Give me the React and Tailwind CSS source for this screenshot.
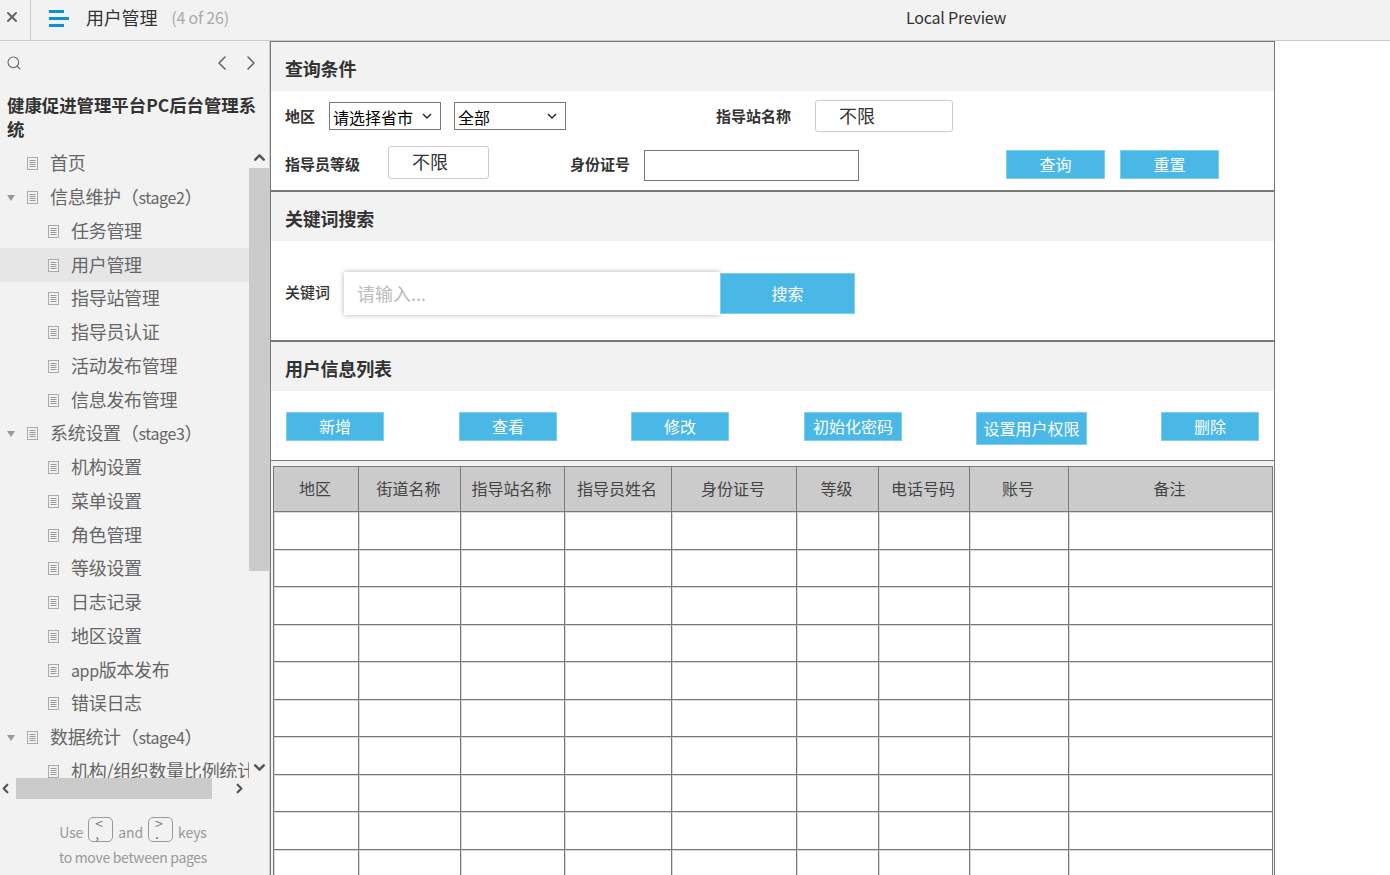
import { X, Search, ChevronLeft, ChevronRight, ChevronUp, ChevronDown } from 'lucide-react';

const NAV = [
  { label: '首页', level: 1 },
  { label: '信息维护（', latin: 'stage2', tail: '）', level: 1, open: true },
  { label: '任务管理', level: 2 },
  { label: '用户管理', level: 2, active: true },
  { label: '指导站管理', level: 2 },
  { label: '指导员认证', level: 2 },
  { label: '活动发布管理', level: 2 },
  { label: '信息发布管理', level: 2 },
  { label: '系统设置（', latin: 'stage3', tail: '）', level: 1, open: true },
  { label: '机构设置', level: 2 },
  { label: '菜单设置', level: 2 },
  { label: '角色管理', level: 2 },
  { label: '等级设置', level: 2 },
  { label: '日志记录', level: 2 },
  { label: '地区设置', level: 2 },
  { lead: 'app', label: '版本发布', level: 2 },
  { label: '错误日志', level: 2 },
  { label: '数据统计（', latin: 'stage4', tail: '）', level: 1, open: true },
  { label: '机构/组织数量比例统计', level: 2 },
];

const COLUMNS = [
  { title: '地区', width: 'w-[85px]' },
  { title: '街道名称', width: 'w-[102px]' },
  { title: '指导站名称', width: 'w-[104px]' },
  { title: '指导员姓名', width: 'w-[107px]' },
  { title: '身份证号', width: 'w-[125px]' },
  { title: '等级', width: 'w-[82px]' },
  { title: '电话号码', width: 'w-[91px]' },
  { title: '账号', width: 'w-[99px]' },
  { title: '备注', width: 'w-[204px]' },
];

const ROWS = [0, 1, 2, 3, 4, 5, 6, 7, 8, 9];

function DocIcon() {
  return (
    <svg width="11" height="13" viewBox="0 0 11 13" className="shrink-0">
      <rect x="0.5" y="0.5" width="10" height="12" fill="#f2f2f2" stroke="#aaaaaa" />
      <path d="M2.5 3.5h6M2.5 5.5h6M2.5 7.5h6M2.5 9.5h6" stroke="#999999" strokeWidth="1" />
    </svg>
  );
}

function NavItem({ item }) {
  return (
    <div className={`flex items-center h-[33.75px] shrink-0 whitespace-nowrap text-[18px] tracking-[-0.3px] text-[#666666] ${item.active ? 'bg-[#e6e6e6]' : ''} ${item.level === 2 ? 'pl-[48px]' : 'pl-[27px]'}`}>
      {item.open && (
        <span className="absolute left-[7px] w-0 h-0 border-l-[4.5px] border-r-[4.5px] border-t-[6px] border-l-transparent border-r-transparent border-t-[#999999]" />
      )}
      <DocIcon />
      <span className="ml-[12px] pb-[2px]">
        {item.lead && <span className="text-[16px] tracking-[-0.4px]">{item.lead}</span>}
        {item.label}
        {item.latin && <span className="text-[16px] tracking-[-0.4px]">{item.latin}</span>}
        {item.tail}
      </span>
    </div>
  );
}

function KeyCap({ top, bottom }) {
  return (
    <span className="inline-flex flex-col w-[25px] h-[25px] mx-[5px] pl-[6px] border border-[#999999] rounded-[5px] text-[14px] leading-[10px] text-[#777777]">
      <span>{top}</span>
      <span>{bottom}</span>
    </span>
  );
}

function Sidebar() {
  return (
    <aside className="flex flex-col w-[270px] h-full shrink-0 bg-[#f2f2f2] border-r border-[#cccccc] text-[#333333]">
      <div className="flex items-center h-[43px] shrink-0 pl-[6px] pr-[6px]">
        <Search size={16} strokeWidth={1.6} color="#666666" />
        <ChevronLeft size={24} strokeWidth={1.6} color="#666666" className="ml-auto" />
        <ChevronRight size={24} strokeWidth={1.6} color="#666666" className="ml-[5px]" />
      </div>
      <h1 className="w-[256px] ml-[7px] mt-[9px] text-[17.4px] leading-[24px] font-bold text-[#333333]">健康促进管理平台PC后台管理系统</h1>
      <div className="flex h-[631px] mt-[6px] shrink-0 overflow-hidden relative">
        <div className="relative flex flex-col flex-1 min-w-0 overflow-hidden">
          {NAV.map((item) => (
            <NavItem key={item.label} item={item} />
          ))}
        </div>
        <div className="flex flex-col items-center w-[20px] shrink-0">
          <ChevronUp size={17} strokeWidth={3.5} color="#555555" className="h-[21px]" />
          <div className="w-full h-[403px] bg-[#cbcbcb]" />
          <div className="flex-1" />
          <ChevronDown size={17} strokeWidth={3.5} color="#555555" className="h-[21px]" />
        </div>
      </div>
      <div className="flex items-center h-[21px] shrink-0 bg-[#f2f2f2]">
        <ChevronLeft size={15} strokeWidth={3.5} color="#555555" className="-ml-[2px]" />
        <div className="w-[196px] h-full ml-[3px] bg-[#cbcbcb]" />
        <ChevronRight size={15} strokeWidth={3.5} color="#555555" className="ml-[20px]" />
      </div>
      <div className="flex flex-col items-center mt-[18px] pr-[3px] text-[14px] text-[#999999]">
        <div className="flex items-start h-[26px] tracking-[-0.1px]">
          <span className="mt-[5px]">Use</span>
          <KeyCap top="<" bottom="," />
          <span className="mt-[5px]">and</span>
          <KeyCap top=">" bottom="." />
          <span className="mt-[5px]">keys</span>
        </div>
        <div className="mt-[3px] leading-[22px] tracking-[-0.3px]">to move between pages</div>
      </div>
    </aside>
  );
}

function BlueButton({ children, className }) {
  return (
    <button type="button" className={`flex items-center justify-center shrink-0 pb-[2px] bg-[#4ab8e6] border border-[#7fd0ef] text-[16px] text-white ${className}`}>
      {children}
    </button>
  );
}

function SectionHeader({ children }) {
  return (
    <div className="flex items-center h-[49px] pl-[14px] pt-[3px] bg-[#f2f2f2] text-[18px] font-bold tracking-[-0.2px] text-[#333333]">{children}</div>
  );
}

function Select({ children }) {
  return (
    <div className="flex items-center shrink-0 w-[112px] h-[28px] pl-[3px] border border-[#797979] bg-white text-[16px] text-black">
      <span className="w-[89px] pt-[2px]">{children}</span>
      <svg width="10" height="6" viewBox="0 0 10 6" className="-mt-[1px]">
        <path d="M1 1l4 4 4-4" fill="none" stroke="#222222" strokeWidth="1.4" />
      </svg>
    </div>
  );
}

function LimitBox({ className }) {
  return (
    <div className={`flex items-center shrink-0 pl-[23px] pb-[2px] border border-[#cccccc] rounded-[3px] bg-white text-[18px] text-[#333333] ${className}`}>不限</div>
  );
}

function Label({ children, className }) {
  return <span className={`shrink-0 text-[15px] font-bold text-[#333333] ${className}`}>{children}</span>;
}

export default function App() {
  return (
    <div className="flex flex-col w-[1390px] h-[875px] overflow-hidden bg-white font-['Noto_Sans_CJK_SC','Noto_Sans',sans-serif]">
      <header className="flex items-center h-[41px] shrink-0 bg-[#f2f2f2] border-b border-[#cccccc]">
        <div className="flex items-center justify-center w-[31px] h-full pb-[6px] pr-[7px] border-r border-[#cccccc]">
          <X size={16} strokeWidth={3} color="#666666" />
        </div>
        <div className="flex flex-col gap-[4px] ml-[18px] -mt-[3px]">
          <span className="block w-[15px] h-[3px] bg-[#0b90d2]" />
          <span className="block w-[20px] h-[3px] bg-[#0b90d2]" />
          <span className="block w-[15px] h-[3px] bg-[#0b90d2]" />
        </div>
        <span className="ml-[17px] -mt-[6px] text-[18px] tracking-[-0.2px] text-[#333333]">用户管理</span>
        <span className="ml-[14px] -mt-[6px] text-[16px] tracking-[-0.2px] text-[#aaaaaa]">(4 of 26)</span>
        <span className="ml-[677px] -mt-[6px] text-[16px] tracking-[-0.2px] text-[#333333]">Local Preview</span>
      </header>

      <div className="flex flex-1 min-h-0">
        <Sidebar />
        <main className="w-[1005px] h-full shrink-0 overflow-hidden border-x border-t border-[#797979]">
          <SectionHeader>查询条件</SectionHeader>
          <div className="h-[101px] pt-[9px] pl-[14px] border-b-2 border-[#797979]">
            <div className="flex items-center h-[32px]">
              <Label className="w-[44px]">地区</Label>
              <Select>请选择省市</Select>
              <span className="ml-[13px]" />
              <Select>全部</Select>
              <Label className="ml-[150px] w-[99px]">指导站名称</Label>
              <LimitBox className="w-[138px] h-[32px]" />
            </div>
            <div className="flex items-start mt-[14px]">
              <Label className="w-[103px] mt-[7px]">指导员等级</Label>
              <LimitBox className="w-[101px] h-[33px]" />
              <Label className="ml-[81px] w-[74px] mt-[7px]">身份证号</Label>
              <input type="text" className="shrink-0 w-[215px] h-[31px] mt-[4px] border border-[#797979] bg-white" />
              <BlueButton className="w-[99px] h-[29px] mt-[4px] ml-[147px]">查询</BlueButton>
              <BlueButton className="w-[99px] h-[29px] mt-[4px] ml-[15px]">重置</BlueButton>
            </div>
          </div>

          <SectionHeader>关键词搜索</SectionHeader>
          <div className="flex items-start h-[101px] pt-[31px] pl-[14px] border-b-2 border-[#797979]">
            <span className="shrink-0 w-[59px] mt-[9px] text-[15px] font-medium text-[#333333]">关键词</span>
            <input type="text" placeholder="请输入..." className="shrink-0 w-[376px] h-[43px] pl-[13px] pb-[2px] bg-white text-[18px] shadow-[0_0_5px_rgba(0,0,0,0.3)] outline-none placeholder:text-[#bbbbbb]" />
            <BlueButton className="w-[135px] h-[41px] mt-[1px]">搜索</BlueButton>
          </div>

          <SectionHeader>用户信息列表</SectionHeader>
          <div className="flex items-start h-[70px] pt-[21px] pl-[15px] border-b border-[#797979]">
            <BlueButton className="w-[98px] h-[29px]">新增</BlueButton>
            <BlueButton className="w-[98px] h-[29px] ml-[75px]">查看</BlueButton>
            <BlueButton className="w-[98px] h-[29px] ml-[74px]">修改</BlueButton>
            <BlueButton className="w-[98px] h-[29px] ml-[75px]">初始化密码</BlueButton>
            <BlueButton className="w-[111px] h-[33px] ml-[74px]">设置用户权限</BlueButton>
            <BlueButton className="w-[98px] h-[29px] ml-[74px]">删除</BlueButton>
          </div>
          <div className="h-full pt-[5px] pl-[2px] bg-[#f2f2f2]">
            <table className="w-[1000px] table-fixed border-collapse border border-[#797979] bg-white">
              <thead>
                <tr className="h-[45px] bg-[#cbcbcb]">
                  {COLUMNS.map((col) => (
                    <th key={col.title} className={`${col.width} p-0 pb-[2px] pr-[2px] border border-[#797979] text-[16px] font-normal text-[#444444]`}>{col.title}</th>
                  ))}
                </tr>
              </thead>
              <tbody>
                {ROWS.map((row) => (
                  <tr key={row} className="h-[37.5px]">
                    {COLUMNS.map((col) => (
                      <td key={col.title} className="p-0 border border-[#797979] shadow-[inset_1px_1px_0_#d9d9d9]" />
                    ))}
                  </tr>
                ))}
              </tbody>
            </table>
          </div>
        </main>
      </div>
    </div>
  );
}
